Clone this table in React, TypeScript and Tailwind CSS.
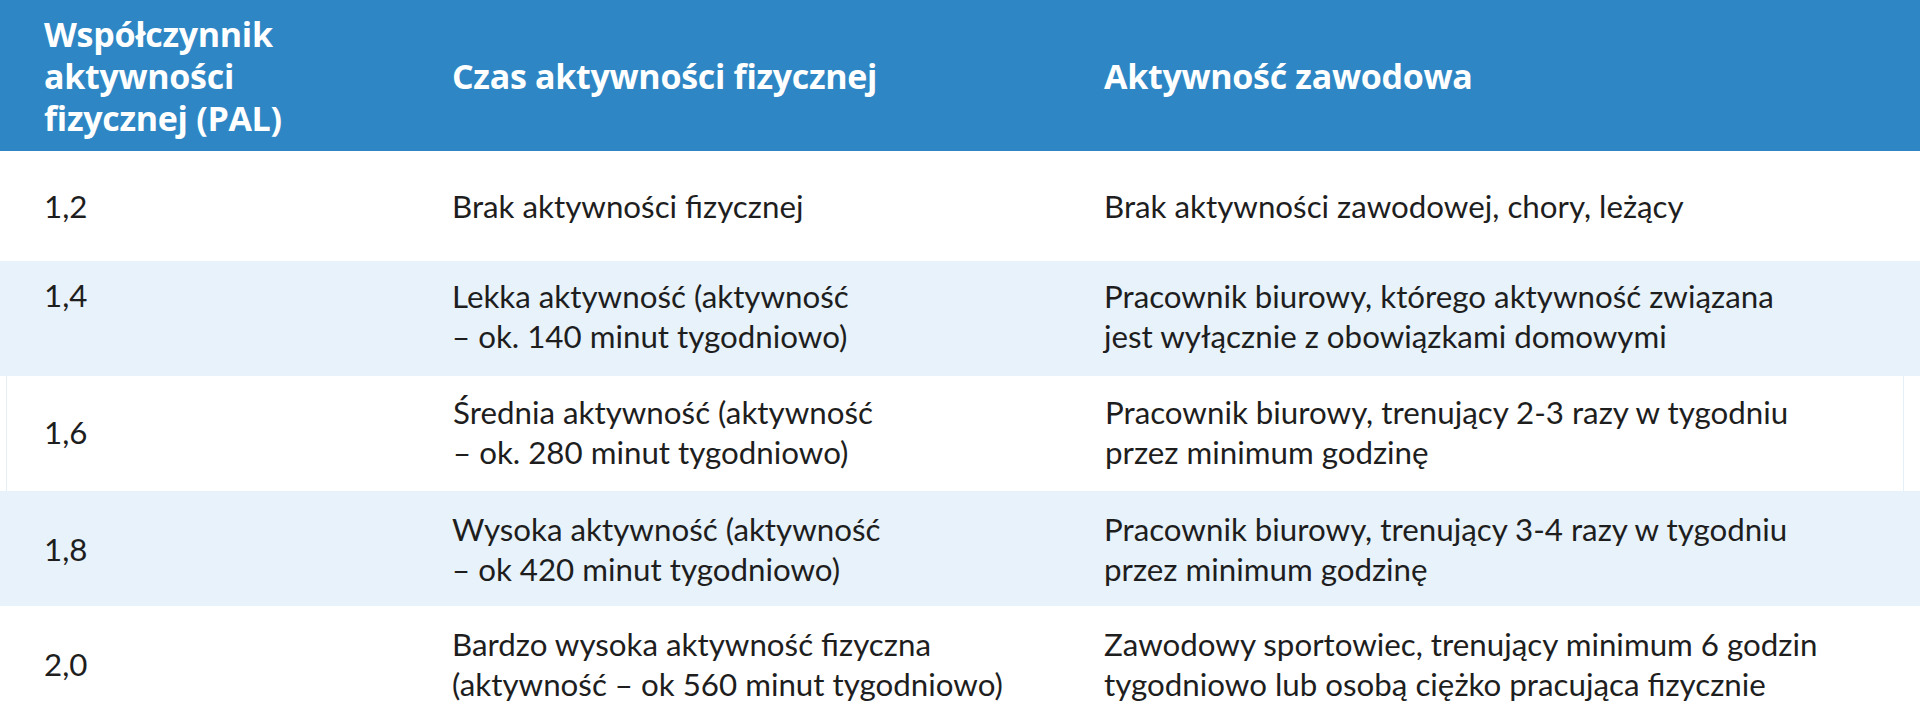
const rows = [
  { pal: "1,2", time: ["Brak aktywności fizycznej"], work: ["Brak aktywności zawodowej, chory, leżący"], bg: "bg-white", h: "h-[110px]" },
  { pal: "1,4", time: ["Lekka aktywność (aktywność", "– ok. 140 minut tygodniowo)"], work: ["Pracownik biurowy, którego aktywność związana", "jest wyłącznie z obowiązkami domowymi"], bg: "bg-[#e7f2fa]", h: "h-[115px]", top: true },
  { pal: "1,6", time: ["Średnia aktywność (aktywność", "– ok. 280 minut tygodniowo)"], work: ["Pracownik biurowy, trenujący 2-3 razy w tygodniu", "przez minimum godzinę"], bg: "bg-white", h: "h-[115px]", framed: true },
  { pal: "1,8", time: ["Wysoka aktywność (aktywność", "– ok 420 minut tygodniowo)"], work: ["Pracownik biurowy, trenujący 3-4 razy w tygodniu", "przez minimum godzinę"], bg: "bg-[#e7f2fa]", h: "h-[115px]" },
  { pal: "2,0", time: ["Bardzo wysoka aktywność fizyczna", "(aktywność – ok 560 minut tygodniowo)"], work: ["Zawodowy sportowiec, trenujący minimum 6 godzin", "tygodniowo lub osobą ciężko pracująca fizycznie"], bg: "bg-white", h: "h-[115px]" },
]

const Lines = ({ lines }: { lines: string[] }) => (
  <div>
    {lines.map((l, i) => (
      <div key={i}>{l}</div>
    ))}
  </div>
)

export default function App() {
  return (
    <div className="w-[1920px] h-[721px] bg-white overflow-hidden">
      {/* header */}
      <div className="grid grid-cols-[408px_652px_1fr] h-[151px] bg-[#2e87c4] text-white font-['Open_Sans',sans-serif] font-bold text-[34px] leading-[42px] tracking-[-0.3px]">
        <div className="flex items-center pl-[44px]">
          <div>
            Współczynnik
            <br />
            aktywności
            <br />
            fizycznej (PAL)
          </div>
        </div>
        <div className="flex items-center pl-[44px]">Czas aktywności fizycznej</div>
        <div className="flex items-center pl-[44px]">Aktywność zawodowa</div>
      </div>

      {/* body */}
      <div className="text-[#1e1e1e] font-['Lato',sans-serif] text-[31.3px] leading-[40px]">
        {rows.map((r) => (
          <div key={r.pal} className={`${r.bg} ${r.h}`}>
            <div
              className={
                r.framed
                  ? "grid grid-cols-[402px_652px_1fr] h-full pb-[4px] ml-[6px] mr-[16px] border-l border-r border-[#e4eff8]"
                  : r.top
                  ? "grid grid-cols-[408px_652px_1fr] h-full pb-[6px]"
                  : "grid grid-cols-[408px_652px_1fr] h-full"
              }
            >
              <div
                className={
                  r.top
                    ? "flex items-start pt-[14px] pl-[44px]"
                    : r.framed
                    ? "flex items-center pl-[37px]"
                    : "flex items-center pl-[44px]"
                }
              >
                {r.pal}
              </div>
              <div className="flex items-center pl-[44px]">
                <Lines lines={r.time} />
              </div>
              <div className="flex items-center pl-[44px]">
                <Lines lines={r.work} />
              </div>
            </div>
          </div>
        ))}
      </div>
    </div>
  )
}
